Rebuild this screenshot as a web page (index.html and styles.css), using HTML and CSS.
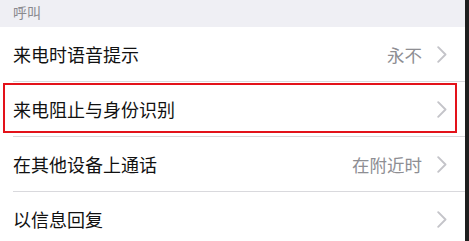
FILE: index.html
```html
<!DOCTYPE html>
<html lang="zh">
<head>
<meta charset="utf-8">
<link rel="stylesheet" href="styles.css">
</head>
<body>
<div class="screen">
  <div class="content">
    <div class="section-header">呼叫</div>
    <div class="list">
      <div class="row">
        <span class="label">来电时语音提示</span>
        <span class="detail">永不</span>
        <svg class="chev" viewBox="0 0 10 17"><path d="M1.2 1.2 L8.5 8.5 L1.2 15.8" /></svg>
      </div>
      <div class="row highlighted">
        <span class="label">来电阻止与身份识别</span>
        <svg class="chev" viewBox="0 0 10 17"><path d="M1.2 1.2 L8.5 8.5 L1.2 15.8" /></svg>
        <div class="mark"></div>
      </div>
      <div class="row">
        <span class="label">在其他设备上通话</span>
        <span class="detail">在附近时</span>
        <svg class="chev" viewBox="0 0 10 17"><path d="M1.2 1.2 L8.5 8.5 L1.2 15.8" /></svg>
      </div>
      <div class="row">
        <span class="label">以信息回复</span>
        <svg class="chev" viewBox="0 0 10 17"><path d="M1.2 1.2 L8.5 8.5 L1.2 15.8" /></svg>
      </div>
    </div>
  </div>
  <div class="edge"></div>
</div>
</body>
</html>
```
FILE: styles.css
```css
html, body {
  margin: 0;
  padding: 0;
  background: #ffffff;
  overflow: hidden;
}
body {
  font-family: "Noto Sans CJK SC", "Noto Sans", sans-serif;
}
.screen {
  display: flex;
  width: 469px;
  height: 241px;
  overflow: hidden;
}
.content {
  flex: 1;
  background: #ffffff;
}
.edge {
  width: 4px;
  background: #1e1e1e;
}
.section-header {
  height: 27px;
  background: #efeff4;
  color: #8a8a8f;
  font-size: 14px;
  line-height: 24px;
  padding-left: 13px;
  box-sizing: border-box;
}
.list {
  margin-left: 13px;
}
.row {
  position: relative;
  height: 55px;
  display: flex;
  align-items: center;
  border-bottom: 1px solid #d9d9dd;
  box-sizing: border-box;
  padding-right: 18px;
}
.label {
  flex: 1;
  font-size: 18px;
  color: #111111;
}
.detail {
  font-size: 17.5px;
  color: #8e8e93;
  margin-right: 15px;
}
.chev {
  width: 10px;
  height: 17px;
  fill: none;
  stroke: #c4c4c9;
  stroke-width: 1.9;
  stroke-linecap: round;
  stroke-linejoin: round;
}
.mark {
  position: absolute;
  left: -10px;
  top: 1px;
  width: 454px;
  height: 50px;
  border: 2px solid #e3121a;
  box-sizing: border-box;
}
```
